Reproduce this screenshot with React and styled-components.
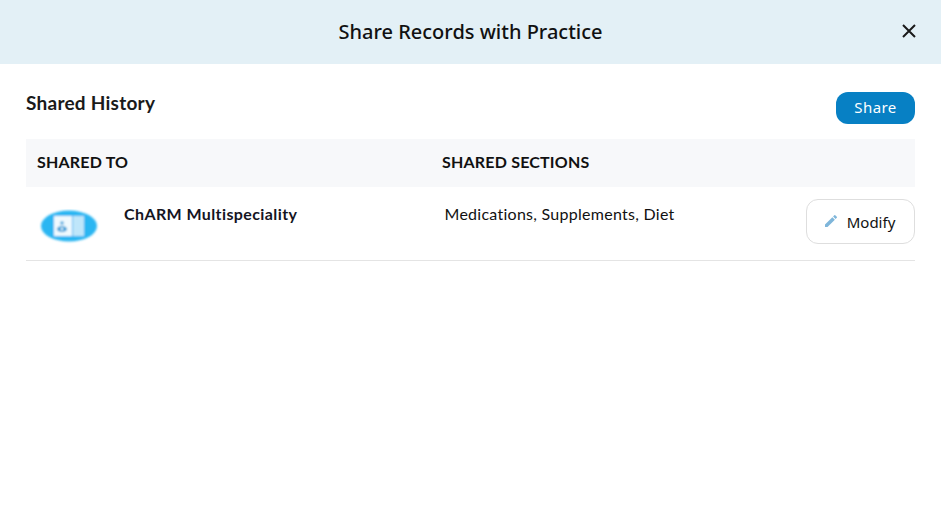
import React from "react";
import styled, { createGlobalStyle } from "styled-components";

const Global = createGlobalStyle`
  html, body { margin: 0; padding: 0; background: #fff; }
  body { font-family: "Lato", sans-serif; color: #111; }
`;
const Modal = styled.div`width: 941px; height: 513px; background: #fff; overflow: hidden;`;
const Header = styled.header`
  height: 64px; background: #e3f0f6; display: flex; align-items: center; justify-content: center; position: relative;
`;
const Title = styled.h1`
  margin: 0 0 2px; font: 500 20px "Noto Sans", sans-serif; color: #111;
`;
const Close = styled.button`
  position: absolute; right: 23px; top: 22px; width: 18px; height: 18px; padding: 0; border: 0; background: none; display: flex;
`;
const Body = styled.main`padding: 27px 26px 0;`;
const TopRow = styled.div`display: flex; justify-content: space-between; align-items: flex-start; height: 48px;`;
const Heading = styled.h2`margin: 0; font: 700 19px/24px "Lato", sans-serif; letter-spacing: 0.25px; color: #1a1a1a;`;
const ShareButton = styled.button`
  width: 79px; height: 32px; margin-top: 1px; border: 0; border-radius: 12px; background: #0780c4; color: #fff;
  font: 400 15px "Noto Sans", sans-serif; letter-spacing: 0.45px; padding: 0 0 3px;
`;
const Columns = styled.div`
  display: grid; grid-template-columns: 405px 1fr; align-items: center; height: 48px; box-sizing: border-box; background: #f7f8fa;
  font: 700 16px "Lato", sans-serif; color: #111; padding: 0 0 3px 11px; letter-spacing: 0.2px;
`;
const Row = styled.div`
  display: grid; grid-template-columns: 98px 320.5px 1fr auto; height: 73px; border-bottom: 1px solid #e4e4e4;
`;
const Logo = styled.svg`width: 62px; height: 36px; margin: 22px 0 0 12px;`;
const Name = styled.div`font: 700 16px/18px "Lato", sans-serif; padding-top: 18px; letter-spacing: 0.4px; color: #15151f;`;
const Sections = styled.div`font: 400 16px/18px "Lato", sans-serif; padding-top: 18px; letter-spacing: 0.27px; color: #111;`;
const ModifyButton = styled.button`
  width: 109px; height: 45px; margin-top: 12px; border: 1px solid #dedede; border-radius: 12px; background: #fff;
  display: flex; align-items: center; justify-content: center; gap: 8px; padding: 0 3px 0 0;
  font: 400 15px "Noto Sans", sans-serif; color: #111;
`;
const PencilIcon = styled.svg`width: 16px; height: 16px; margin-top: -2px;`;

export default function App() {
  return (
    <Modal>
      <Global />
      <Header>
        <Title>Share Records with Practice</Title>
        <Close aria-label="Close">
          <svg width="18" height="18" viewBox="0 0 18 18"><path d="M3 3 15 15M15 3 3 15" stroke="#1a1a1a" strokeWidth="2" fill="none" /></svg>
        </Close>
      </Header>
      <Body>
        <TopRow>
          <Heading>Shared History</Heading>
          <ShareButton>Share</ShareButton>
        </TopRow>
        <Columns><span>SHARED TO</span><span>SHARED SECTIONS</span></Columns>
        <Row>
          <Logo viewBox="0 0 62 36">
            <defs><filter id="b" x="-10%" y="-10%" width="120%" height="120%"><feGaussianBlur stdDeviation="1" /></filter></defs>
            <g filter="url(#b)">
              <ellipse cx="31" cy="17" rx="28" ry="15.5" fill="#2cb6f2" />
              <rect x="16" y="7" width="18" height="20" fill="#f0f9fe" />
              <rect x="35" y="7" width="11" height="20" fill="#bfe6fa" />
              <circle cx="24" cy="14" r="1.8" fill="#3ba3dc" />
              <ellipse cx="24" cy="20" rx="5" ry="3" fill="#2c9ad6" />
              <circle cx="24" cy="20" r="1.4" fill="#f0f9fe" />
            </g>
          </Logo>
          <Name>ChARM Multispeciality</Name>
          <Sections>Medications, Supplements, Diet</Sections>
          <ModifyButton>
            <PencilIcon viewBox="0 0 24 24"><path fill="#7fb6da" d="M3 17.25V21h3.75L17.81 9.94l-3.75-3.75L3 17.25zM20.71 7.04a1 1 0 0 0 0-1.41l-2.34-2.34a1 1 0 0 0-1.41 0l-1.83 1.83 3.75 3.75 1.83-1.83z" /></PencilIcon>
            Modify
          </ModifyButton>
        </Row>
      </Body>
    </Modal>
  );
}
